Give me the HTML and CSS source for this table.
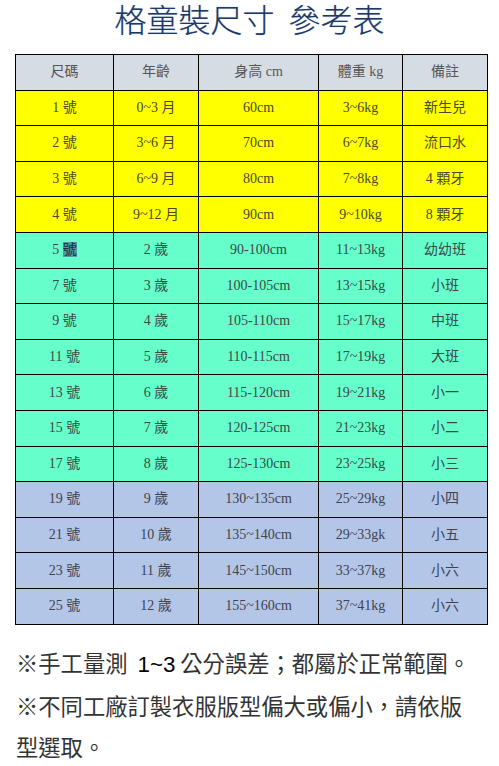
FILE: index.html
```html
<!DOCTYPE html>
<html lang="zh-Hant">
<head>
<meta charset="utf-8">
<link rel="stylesheet" href="styles.css">
</head>
<body>
<h1 class="title">格童裝尺寸&nbsp; 參考表</h1>
<table class="size-table">
  <colgroup>
    <col class="c1"><col class="c2"><col class="c3"><col class="c4"><col class="c5">
  </colgroup>
  <thead>
    <tr class="head"><th>尺碼</th><th>年齡</th><th>身高 cm</th><th>體重 kg</th><th>備註</th></tr>
  </thead>
  <tbody>
    <tr class="yellow"><td>1 號</td><td>0~3 月</td><td>60cm</td><td>3~6kg</td><td>新生兒</td></tr>
    <tr class="yellow"><td>2 號</td><td>3~6 月</td><td>70cm</td><td>6~7kg</td><td>流口水</td></tr>
    <tr class="yellow"><td>3 號</td><td>6~9 月</td><td>80cm</td><td>7~8kg</td><td>4 顆牙</td></tr>
    <tr class="yellow"><td>4 號</td><td>9~12 月</td><td>90cm</td><td>9~10kg</td><td>8 顆牙</td></tr>
    <tr class="green"><td>5 <span class="sel">號</span></td><td>2 歲</td><td>90-100cm</td><td>11~13kg</td><td>幼幼班</td></tr>
    <tr class="green"><td>7 號</td><td>3 歲</td><td>100-105cm</td><td>13~15kg</td><td>小班</td></tr>
    <tr class="green"><td>9 號</td><td>4 歲</td><td>105-110cm</td><td>15~17kg</td><td>中班</td></tr>
    <tr class="green"><td>11 號</td><td>5 歲</td><td>110-115cm</td><td>17~19kg</td><td>大班</td></tr>
    <tr class="green"><td>13 號</td><td>6 歲</td><td>115-120cm</td><td>19~21kg</td><td>小一</td></tr>
    <tr class="green"><td>15 號</td><td>7 歲</td><td>120-125cm</td><td>21~23kg</td><td>小二</td></tr>
    <tr class="green"><td>17 號</td><td>8 歲</td><td>125-130cm</td><td>23~25kg</td><td>小三</td></tr>
    <tr class="blue"><td>19 號</td><td>9 歲</td><td>130~135cm</td><td>25~29kg</td><td>小四</td></tr>
    <tr class="blue"><td>21 號</td><td>10 歲</td><td>135~140cm</td><td>29~33gk</td><td>小五</td></tr>
    <tr class="blue"><td>23 號</td><td>11 歲</td><td>145~150cm</td><td>33~37kg</td><td>小六</td></tr>
    <tr class="blue"><td>25 號</td><td>12 歲</td><td>155~160cm</td><td>37~41kg</td><td>小六</td></tr>
  </tbody>
</table>
<div class="notes">
  <p class="note">※手工量測&nbsp; <span class="num">1~3</span> 公分誤差；都屬於正常範圍。</p>
  <p class="note">※不同工廠訂製衣服版型偏大或偏小，請依版型選取。</p>
</div>
</body>
</html>
```

FILE: styles.css
```css
html, body {
  margin: 0;
  padding: 0;
  background: #ffffff;
}
body {
  font-family: "Liberation Serif", "Noto Sans CJK TC", serif;
  color: #404040;
}
.title {
  margin: 0;
  height: 54px;
  padding-top: 2px;
  box-sizing: border-box;
  text-align: center;
  font-family: "Noto Sans CJK TC", sans-serif;
  font-weight: 300;
  font-size: 32px;
  line-height: 32px;
  color: #1f3864;
  text-shadow: 0 0 1px #8eaadb;
}
.size-table {
  margin-left: 15px;
  width: 472px;
  table-layout: fixed;
  border-collapse: collapse;
  font-size: 14px;
}
.c1 { width: 98px; }
.c2 { width: 85px; }
.c3 { width: 120px; }
.c4 { width: 84px; }
.c5 { width: 85px; }
.size-table th,
.size-table td {
  border: 1.5px solid #000;
  height: 34.6px;
  padding: 0;
  text-align: center;
  vertical-align: middle;
  font-weight: 400;
  line-height: 16px;
}
.head th {
  background: #d6dce4;
  color: #555;
}
.yellow td { background: #ffff00; color: #4a4a2a; }
.green td { background: #66ffcc; color: #3a4a44; }
.blue td { background: #b4c6e7; color: #3e4350; }
.sel {
  background: #4f9aa0;
  color: #1a2b40;
}
.notes {
  margin-top: 17px;
  padding-left: 16px;
  width: 455px;
  font-family: "Noto Sans CJK TC", sans-serif;
  font-size: 22.3px;
  line-height: 41px;
  color: #333;
}
.note {
  margin: 0;
}
.num {
  font-family: "Liberation Sans", sans-serif;
  color: #000;
}
```
